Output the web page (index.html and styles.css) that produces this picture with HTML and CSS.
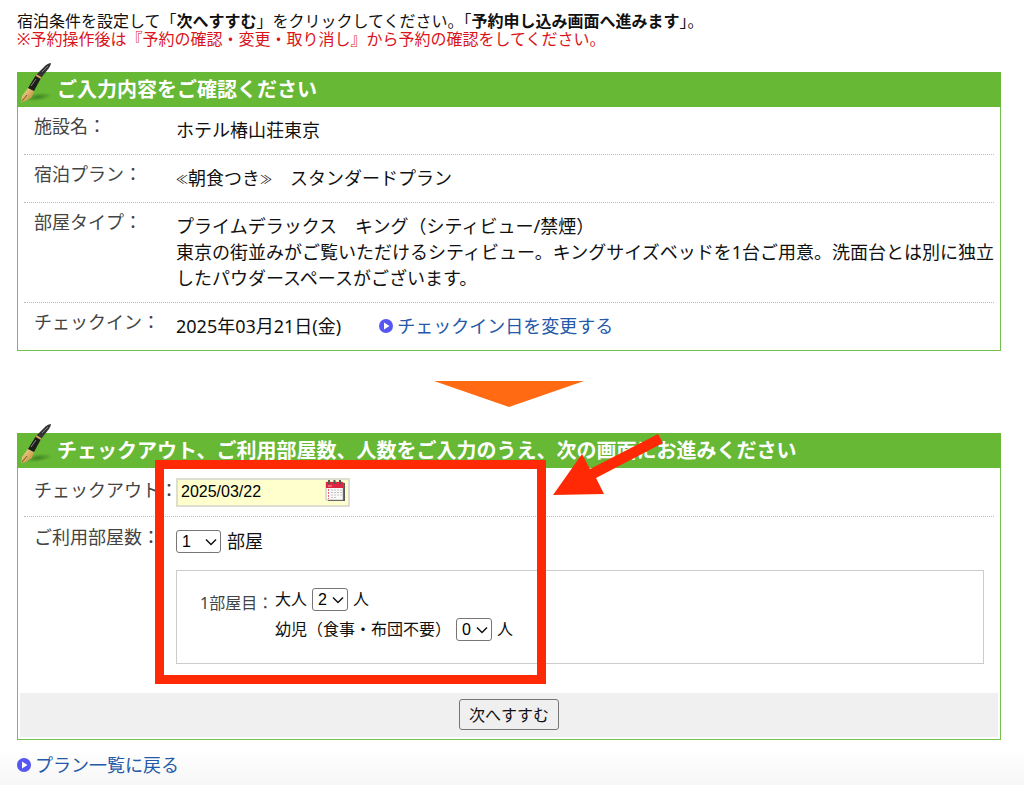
FILE: index.html
```html
<!DOCTYPE html>
<html lang="ja">
<head>
<meta charset="utf-8">
<title>宿泊予約</title>
<link rel="stylesheet" href="styles.css">
</head>
<body>
<svg class="defs" aria-hidden="true">
  <defs>
    <linearGradient id="nib" x1="0" y1="0" x2="1" y2="1">
      <stop offset="0" stop-color="#f8dfa0"/><stop offset="1" stop-color="#b9822f"/>
    </linearGradient>
    <radialGradient id="shade">
      <stop offset="0" stop-color="#3f8420"/><stop offset="1" stop-color="#3f8420" stop-opacity="0"/>
    </radialGradient>
    <symbol id="pen" viewBox="0 0 32 40">
      <ellipse cx="18" cy="34" rx="14" ry="4" fill="url(#shade)" transform="rotate(-8 18 34)"/>
      <path d="M8 25 14 28 12 34 6 38 1 39 2 33Z" fill="url(#nib)"/>
      <path d="M2 38 7 32" stroke="#7b571c" fill="none"/>
      <path d="M8 25 16 12 21 15 14 28Z" fill="#1d1d1b"/>
      <path d="M16 12 26 2Q29 0 31 0 31 2 29 5L21 15Z" fill="#333"/>
      <path d="M16 12 21 15" stroke="#dca85c" stroke-width="2"/>
      <path d="M22 9 28 3M11 23 16 16" stroke="#858585" fill="none"/>
    </symbol>
    <symbol id="bullet" viewBox="0 0 14 14">
      <circle cx="7" cy="7" r="7" fill="#5656f2"/>
      <path d="M5 3.5 10.5 7 5 10.5Z" fill="#fff"/>
    </symbol>
    <symbol id="chevron" viewBox="0 0 12 8">
      <path d="M1 1.5 6 6.5 11 1.5" fill="none" stroke="#111" stroke-width="1.5"/>
    </symbol>
  </defs>
</svg>

<main>
  <div class="intro">
    <p>宿泊条件を設定して「<strong>次へすすむ</strong>」をクリックしてください。「<strong>予約申し込み画面へ進みます</strong>」。</p>
    <p class="notice">※予約操作後は『予約の確認・変更・取り消し』から予約の確認をしてください。</p>
  </div>

  <section class="panel">
    <h2 class="title"><svg class="pen" aria-hidden="true"><use href="#pen"/></svg>ご入力内容をご確認ください</h2>
    <dl class="rows">
      <div class="row"><dt>施設名：</dt><dd>ホテル椿山荘東京</dd></div>
      <div class="row"><dt>宿泊プラン：</dt><dd><span class="bracket">≪</span>朝食つき<span class="bracket">≫</span>　スタンダードプラン</dd></div>
      <div class="row"><dt>部屋タイプ：</dt><dd>プライムデラックス　キング（シティビュー/禁煙）<br>東京の街並みがご覧いただけるシティビュー。キングサイズベッドを1台ご用意。洗面台とは別に独立したパウダースペースがございます。</dd></div>
      <div class="row"><dt>チェックイン：</dt><dd class="checkin"><span>2025年03月21日(金)</span><a class="link" href="#"><svg class="bullet" aria-hidden="true"><use href="#bullet"/></svg>チェックイン日を変更する</a></dd></div>
    </dl>
  </section>

  <svg class="down" viewBox="0 0 150 26" aria-hidden="true"><path d="M0 0H150L75 26Z" fill="#ff6a13"/></svg>

  <form class="panel">
    <h2 class="title"><svg class="pen" aria-hidden="true"><use href="#pen"/></svg>チェックアウト、ご利用部屋数、人数をご入力のうえ、次の画面にお進みください</h2>
    <div class="rows">
      <div class="row checkout">
        <label for="checkout">チェックアウト：</label>
        <div class="date">
          <input id="checkout" type="text" value="2025/03/22">
          <svg class="calendar" viewBox="0 0 21 22" aria-hidden="true">
            <path d="M2 3H20V21H3Z" fill="#555"/>
            <path d="M1 2H18V20H1Z" fill="#fafafa" stroke="#a99" stroke-width=".6"/>
            <path d="M1 2H18V8H1Z" fill="#dc2740"/>
            <path d="M4 0V4M9.500 0V4M15 0V4" stroke="#555" stroke-width="2"/>
            <path d="M3 6H7" stroke="#f7a0a8"/>
            <path d="M6 10H17M6 12.500H17M6 15H17M6 17.500H11" stroke="#c4c4c4" stroke-dasharray="2 1"/>
            <path d="M3.500 9V19" stroke="#ee6570" stroke-dasharray="2 1"/>
          </svg>
        </div>
      </div>
      <div class="row rooms">
        <label for="rooms">ご利用部屋数：</label>
        <div>
          <div class="count">
            <span class="select wide"><select id="rooms"><option>1</option><option>2</option></select><svg aria-hidden="true"><use href="#chevron"/></svg></span>部屋
          </div>
          <fieldset class="room">
            <span class="room-name">1部屋目：</span>
            <div>
              <div class="guest"><label for="adults">大人</label><span class="select"><select id="adults"><option>2</option><option>1</option></select><svg aria-hidden="true"><use href="#chevron"/></svg></span>人</div>
              <div class="guest"><label for="infants">幼児（食事・布団不要）</label><span class="select"><select id="infants"><option>0</option><option>1</option></select><svg aria-hidden="true"><use href="#chevron"/></svg></span>人</div>
            </div>
          </fieldset>
        </div>
      </div>
    </div>
    <div class="actions"><button type="submit">次へすすむ</button></div>
    <div class="highlight"></div>
    <svg class="pointer" viewBox="0 0 112 62" aria-hidden="true"><path d="M105 1 110 10 43 45 51 61 0 62 29 21 37 36Z" fill="#ff2a05"/></svg>
  </form>

  <a class="link back" href="#"><svg class="bullet" aria-hidden="true"><use href="#bullet"/></svg>プラン一覧に戻る</a>
</main>
</body>
</html>
```
FILE: styles.css
```css
* { box-sizing: border-box; }

body {
  margin: 0;
  font-family: "Noto Sans", "Noto Sans CJK JP", sans-serif;
  font-size: 18px;
  line-height: 26px;
  color: #111;
}

main {
  padding: 12px 23px 8px 17px;
  background: linear-gradient(to top, #f6f6f6, #fff 36px);
}

p, h2, dl, dd { margin: 0; }

.defs { position: absolute; width: 0; height: 0; }

.intro { font-size: 16px; line-height: 18px; margin-bottom: 24px; }
.notice { color: #d9141b; }

.panel { position: relative; border: 1px solid #76c14e; border-top: 0; }

.title {
  position: relative;
  margin: 0 -1px;
  padding: 0 40px;
  background: #66b835;
  color: #fff;
  font-size: 20px;
  line-height: 35px;
}
.pen { position: absolute; left: 3px; top: -9px; width: 32px; height: 40px; }

.rows { padding: 0 6px; }
.row {
  display: grid;
  grid-template-columns: 142px 1fr;
  padding: 10px 0 11px 10px;
  border-bottom: 1px dotted #bbb;
}
.row:last-child { border-bottom: 0; }
.row > dt, .row > label { color: #444; white-space: nowrap; }
.row > dt { margin-top: -4px; }
.row > dd { margin-right: -6px; }
.bracket { font-size: 12px; line-height: 1; vertical-align: 1px; }

.checkin { display: flex; gap: 38px; }

.link { display: inline-flex; align-items: center; gap: 4px; color: #2359a8; text-decoration: none; }
.bullet { width: 14px; height: 14px; flex: none; }
.back { display: flex; width: fit-content; margin-top: 12px; }

.down { display: block; width: 150px; height: 26px; margin: 30px auto 26px; }

.checkout { padding: 9px 0 10px 10px; }
.date { position: relative; width: 174px; height: 29px; }
.date input {
  width: 100%;
  height: 100%;
  padding: 0 30px 0 3px;
  border: 2px solid #deded0;
  background: #ffffce;
  color: #000;
  font: 16px "Liberation Sans", sans-serif;
}
.calendar { position: absolute; right: 4px; top: 3px; width: 21px; height: 22px; }

.rooms { padding: 7px 10px 29px; }
.count { display: flex; align-items: center; gap: 6px; height: 24px; margin: 5px 0 17px; }

.select { position: relative; display: inline-flex; width: 36px; height: 23px; }
.select.wide { width: 45px; }
.select select {
  appearance: none;
  width: 100%;
  height: 100%;
  padding: 0 5px;
  border: 1px solid #767676;
  border-radius: 3px;
  background: #fff;
  color: #000;
  font: 16px "Liberation Sans", sans-serif;
}
.select svg { position: absolute; right: 4px; top: 8px; width: 12px; height: 8px; pointer-events: none; }

.room {
  display: flex;
  margin: 0;
  padding: 13px 23px 19px;
  border: 1px solid #ccc;
  font-size: 16px;
  line-height: 30px;
}
.room-name { width: 75px; padding-top: 4px; color: #444; white-space: nowrap; }
.guest { display: flex; align-items: center; gap: 5px; height: 30px; }

.actions { margin: 0 2px 2px; padding: 6px 0 7px; background: #f0f0f0; text-align: center; }
button {
  display: block;
  margin: 0 auto;
  height: 31px;
  padding: 0 9px;
  border: 1px solid #767676;
  border-radius: 3px;
  background: #efefef;
  color: #111;
  font-family: inherit;
  font-size: 16px;
  line-height: 26px;
}

.highlight {
  position: absolute;
  left: 137px;
  top: 27px;
  width: 391px;
  height: 224px;
  border: 9px solid #ff2a05;
  pointer-events: none;
}
.pointer { position: absolute; left: 535px; top: 0; width: 112px; height: 62px; pointer-events: none; }
```
